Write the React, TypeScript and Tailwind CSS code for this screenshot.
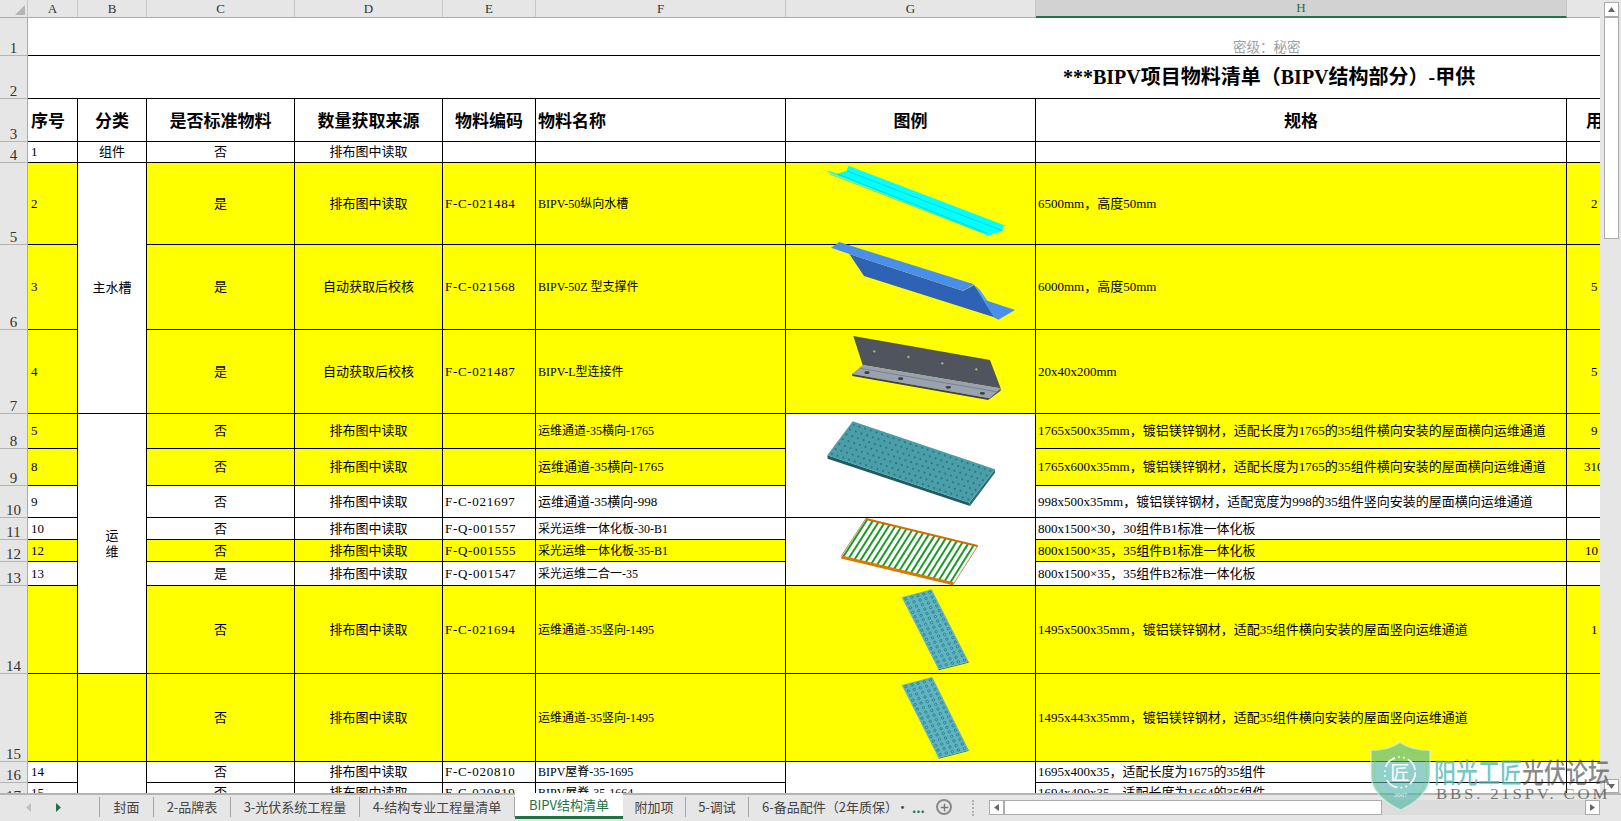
import { Plus } from 'lucide-react';

/* -------------------------------------------------------
 * Sheet data
 * ----------------------------------------------------- */

type Span = { span: number; text?: string; yellow?: boolean };

type Row = {
  num: number;
  height: string;
  yellow?: boolean;
  seq?: string;
  cat?: Span;
  std: string;
  source: string;
  code?: string;
  name?: string;
  nameSize?: string;
  pic?: Span;
  spec?: string;
  qty?: string;
  qtyPad?: string;
};

const SOURCE = '排布图中读取';
const AUTO = '自动获取后校核';

const ROWS: Row[] = [
  { num: 4, height: 'h-[21px]', seq: '1', cat: { span: 1, text: '组件' }, std: '否', source: SOURCE, pic: { span: 1 } },
  { num: 5, height: 'h-[82px]', yellow: true, seq: '2', cat: { span: 3, text: '主水槽' }, std: '是', source: SOURCE, code: 'F-C-021484', name: 'BIPV-50纵向水槽', nameSize: 'text-[12px]', pic: { span: 1, yellow: true }, spec: '6500mm，高度50mm', qty: '2', qtyPad: 'pl-[24px]' },
  { num: 6, height: 'h-[85px]', yellow: true, seq: '3', std: '是', source: AUTO, code: 'F-C-021568', name: 'BIPV-50Z 型支撑件', nameSize: 'text-[12px]', pic: { span: 1, yellow: true }, spec: '6000mm，高度50mm', qty: '5', qtyPad: 'pl-[24px]' },
  { num: 7, height: 'h-[84px]', yellow: true, seq: '4', std: '是', source: AUTO, code: 'F-C-021487', name: 'BIPV-L型连接件', nameSize: 'text-[12px]', pic: { span: 1, yellow: true }, spec: '20x40x200mm', qty: '5', qtyPad: 'pl-[24px]' },
  { num: 8, height: 'h-[35px]', yellow: true, seq: '5', cat: { span: 7, text: '运维' }, std: '否', source: SOURCE, name: '运维通道-35横向-1765', nameSize: 'text-[12px]', pic: { span: 3 }, spec: '1765x500x35mm，镀铝镁锌钢材，适配长度为1765的35组件横向安装的屋面横向运维通道', qty: '9', qtyPad: 'pl-[24px]' },
  { num: 9, height: 'h-[37px]', yellow: true, seq: '8', std: '否', source: SOURCE, name: '运维通道-35横向-1765', spec: '1765x600x35mm，镀铝镁锌钢材，适配长度为1765的35组件横向安装的屋面横向运维通道', qty: '310', qtyPad: 'pl-[17px]' },
  { num: 10, height: 'h-[32px]', seq: '9', std: '否', source: SOURCE, code: 'F-C-021697', name: '运维通道-35横向-998', spec: '998x500x35mm，镀铝镁锌钢材，适配宽度为998的35组件竖向安装的屋面横向运维通道' },
  { num: 11, height: 'h-[22px]', seq: '10', std: '否', source: SOURCE, code: 'F-Q-001557', name: '采光运维一体化板-30-B1', nameSize: 'text-[12px]', pic: { span: 3 }, spec: '800x1500×30，30组件B1标准一体化板' },
  { num: 12, height: 'h-[22px]', yellow: true, seq: '12', std: '否', source: SOURCE, code: 'F-Q-001555', name: '采光运维一体化板-35-B1', nameSize: 'text-[12px]', spec: '800x1500×35，35组件B1标准一体化板', qty: '10', qtyPad: 'pl-[18px]' },
  { num: 13, height: 'h-[24px]', seq: '13', std: '是', source: SOURCE, code: 'F-Q-001547', name: '采光运维二合一-35', nameSize: 'text-[12px]', spec: '800x1500×35，35组件B2标准一体化板' },
  { num: 14, height: 'h-[88px]', yellow: true, std: '否', source: SOURCE, code: 'F-C-021694', name: '运维通道-35竖向-1495', nameSize: 'text-[12px]', pic: { span: 1, yellow: true }, spec: '1495x500x35mm，镀铝镁锌钢材，适配35组件横向安装的屋面竖向运维通道', qty: '1', qtyPad: 'pl-[24px]' },
  { num: 15, height: 'h-[88px]', yellow: true, cat: { span: 1, yellow: true }, std: '否', source: SOURCE, name: '运维通道-35竖向-1495', nameSize: 'text-[12px]', pic: { span: 1, yellow: true }, spec: '1495x443x35mm，镀铝镁锌钢材，适配35组件横向安装的屋面竖向运维通道' },
  { num: 16, height: 'h-[21px]', seq: '14', cat: { span: 2 }, std: '否', source: SOURCE, code: 'F-C-020810', name: 'BIPV屋脊-35-1695', nameSize: 'text-[12px]', pic: { span: 2 }, spec: '1695x400x35，适配长度为1675的35组件' },
  { num: 17, height: 'h-[21px]', seq: '15', std: '否', source: SOURCE, code: 'F-C-020819', name: 'BIPV屋脊-35-1664', nameSize: 'text-[12px]', spec: '1694x400x35，适配长度为1664的35组件' },
];

const COLUMNS = [
  { label: 'A', width: 'w-[50px]' },
  { label: 'B', width: 'w-[69px]' },
  { label: 'C', width: 'w-[148px]' },
  { label: 'D', width: 'w-[148px]' },
  { label: 'E', width: 'w-[93px]' },
  { label: 'F', width: 'w-[250px]' },
  { label: 'G', width: 'w-[250px]' },
  { label: 'H', width: 'w-[531px]' },
  { label: '', width: 'w-[44px]' },
];

const TABS = [
  { label: '封面', width: 'w-[54px]' },
  { label: '2-品牌表', width: 'w-[77px]' },
  { label: '3-光伏系统工程量', width: 'w-[129px]' },
  { label: '4-结构专业工程量清单', width: 'w-[155px]' },
  { label: 'BIPV结构清单', width: 'w-[108px]', active: true },
  { label: '附加项', width: 'w-[63px]' },
  { label: '5-调试', width: 'w-[63px]' },
];

const CELL = 'border-r border-b border-black p-0 align-middle overflow-hidden whitespace-nowrap';
const ROW_HEAD = 'bg-[#e6e6e6] border-r border-b border-r-[#ababab] border-b-[#b4b4b4] p-0 align-bottom text-center text-[15px] leading-[13px] text-[#333]';

/* -------------------------------------------------------
 * Pictures floating over the sheet
 * ----------------------------------------------------- */

type Pt = [number, number];

// point inside a quad a-b-c-d, u along a->b, v along a->d
function quadPoint(a: Pt, b: Pt, c: Pt, d: Pt, u: number, v: number): Pt {
  const tx = a[0] + (b[0] - a[0]) * u;
  const ty = a[1] + (b[1] - a[1]) * u;
  const bx = d[0] + (c[0] - d[0]) * u;
  const by = d[1] + (c[1] - d[1]) * u;
  return [tx + (bx - tx) * v, ty + (by - ty) * v];
}

function Holes({ quad, cols, rows, r, fill, ring }: { quad: [Pt, Pt, Pt, Pt]; cols: number; rows: number; r: number; fill: string; ring?: string }) {
  const dots: Pt[] = [];
  for (let i = 0; i < cols; i++) {
    for (let j = 0; j < rows; j++) {
      dots.push(quadPoint(quad[0], quad[1], quad[2], quad[3], (i + 0.5) / cols, (j + 0.5) / rows));
    }
  }
  return (
    <>
      {dots.map(([x, y], i) => (
        <circle key={i} cx={x} cy={y} r={r} fill={fill} stroke={ring} strokeWidth={ring ? 2.2 : 0} />
      ))}
    </>
  );
}

function UpperPictures() {
  return (
    <svg className="absolute left-[780px] top-[150px] w-[260px] h-[270px]" viewBox="0 0 780 810">
      {/* cyan gutter */}
      <polygon points="138,64 148,64 172,71 200,62 205,47 677,227 669,229 667,244 640,251 622,258 606,248" fill="#00ffff" />
      <polyline points="150,72 606,248" fill="none" stroke="#14d0d8" strokeWidth="2" />
      <polyline points="172,72 622,250" fill="none" stroke="#10c0c8" strokeWidth="2" />
      <polyline points="203,64 667,242" fill="none" stroke="#10c0c8" strokeWidth="2" />
      {/* blue bracket */}
      <polygon points="208,312 550,423 582,405 652,505 252,378" fill="#2d62b5" />
      <polygon points="153,293 178,276 205,285 582,403 550,423 208,312" fill="#4a8fea" />
      <polygon points="582,404 600,420 660,508 642,502" fill="#5aa0f5" />
      <polygon points="615,450 705,480 655,509 642,502" fill="#4a8fea" />
      {/* grey angle */}
      <polygon points="220,558 630,630 662,715 640,712 248,645" fill="#50545c" />
      <polygon points="248,645 662,715 628,745 216,672" fill="#9aa2b0" />
      <polygon points="216,672 628,745 625,750 217,678" fill="#3f4248" />
      <polygon points="628,745 662,715 662,722 625,750" fill="#55585f" />
      <line x1="240" y1="655" x2="650" y2="725" stroke="#6c7079" strokeWidth="2" />
      {[[283, 604], [385, 621], [487, 640], [589, 658]].map(([x, y]) => (
        <circle key={x} cx={x} cy={y} r="5" fill="#a8a88e" stroke="#33363c" strokeWidth="1.5" />
      ))}
      {[[261, 668], [362, 686], [505, 712], [607, 730]].map(([x, y]) => (
        <ellipse key={x} cx={x} cy={y} rx="8" ry="4" fill="#3a3d44" />
      ))}
    </svg>
  );
}

function LowerPictures() {
  const stripes = Array.from({ length: 20 }, (_, i) => (i + 0.3) / 20);
  const plate: [Pt, Pt, Pt, Pt] = [[218, 34], [645, 178], [568, 278], [142, 136]];
  const panelA: [Pt, Pt, Pt, Pt] = [[365, 562], [455, 538], [566, 755], [475, 778]];
  const panelB: [Pt, Pt, Pt, Pt] = [[365, 825], [457, 801], [566, 1020], [475, 1043]];
  return (
    <svg className="absolute left-[780px] top-[410px] w-[260px] h-[360px]" viewBox="0 0 780 1080">
      {/* perforated walkway plate */}
      <polygon points="142,136 568,278 570,288 143,146" fill="#1f5a66" />
      <polygon points="568,278 645,178 645,188 570,288" fill="#2c6c76" />
      <polygon points="218,34 645,178 568,278 142,136" fill="#4a9ea8" />
      <Holes quad={plate} cols={25} rows={7} r={3.2} fill="#2f7680" />

      {/* daylight panel frame */}
      <polygon points="258,325 593,408 520,525 184,440" fill="#ffffff" />
      {stripes.map(u => {
        const top = quadPoint([258, 325], [593, 408], [520, 525], [184, 440], u, 0);
        const bottom = quadPoint([258, 325], [593, 408], [520, 525], [184, 440], u, 1);
        return <line key={u} x1={top[0]} y1={top[1]} x2={bottom[0]} y2={bottom[1]} stroke="#1f9a2a" strokeWidth="6" />;
      })}
      <line x1="258" y1="325" x2="184" y2="438" stroke="#c08a60" strokeWidth="3" />
      <line x1="593" y1="408" x2="520" y2="523" stroke="#c08a60" strokeWidth="3" />
      <line x1="258" y1="327" x2="593" y2="408" stroke="#d06f00" strokeWidth="6" />
      <line x1="184" y1="441" x2="520" y2="521" stroke="#d97a00" strokeWidth="9" />

      {/* vertical walkway plates */}
      <polygon points="475,778 566,755 566,758 476,781" fill="#2f7f8c" />
      <polygon points="365,562 455,538 566,755 475,778" fill="#5fb4c2" />
      <Holes quad={panelA} cols={5} rows={16} r={3.5} fill="#74c2cc" ring="#1f6a78" />
      <polygon points="475,1043 566,1020 566,1023 476,1046" fill="#2f7f8c" />
      <polygon points="365,825 457,801 566,1020 475,1043" fill="#5fb4c2" />
      <Holes quad={panelB} cols={5} rows={16} r={3.5} fill="#74c2cc" ring="#1f6a78" />
    </svg>
  );
}

function Watermark() {
  return (
    <>
      <svg className="absolute left-[1360px] top-[735px] w-[74px] h-[84px] pointer-events-none" viewBox="0 0 222 252">
        <path d="M120 22 C95 38 65 46 33 46 L33 120 C33 170 80 205 122 225 C165 205 210 170 210 120 L210 46 C175 46 145 38 120 22Z" fill="#4fb3ad" fillOpacity="0.62" stroke="#d8efe6" strokeOpacity="0.75" strokeWidth="4" />
        <path d="M120 34 C98 48 70 56 44 56 L44 120 C44 162 84 194 122 213 C160 194 199 162 199 120 L199 56 C172 56 142 48 120 34Z" fill="none" stroke="#8fd05c" strokeOpacity="0.6" strokeWidth="3" />
        <circle cx="120" cy="112" r="46" fill="none" stroke="#ffffff" strokeWidth="5" strokeDasharray="40 10 5 10 5 10" />
        <text x="120" y="134" textAnchor="middle" fontSize="58" fill="#ffffff" fontFamily="'Noto Sans CJK SC', sans-serif">匠</text>
        <text x="122" y="187" textAnchor="middle" fontSize="20" fill="#dff3ee" fontFamily="'Liberation Serif', serif">2007</text>
      </svg>
      <div className="absolute left-[1434px] top-[752px] text-[22px] leading-[30px] font-medium scale-y-[1.25] origin-top whitespace-nowrap pointer-events-none [font-family:'Noto_Sans_CJK_SC',sans-serif]">
        <span className="text-[#4fb8b4]/80">阳光工匠</span>
        <span className="text-[#3a3a3a]/60">光伏论坛</span>
      </div>
      <div className="absolute left-[1436px] top-[785px] text-[15px] leading-[18px] tracking-[2.5px] scale-x-[1.12] origin-left whitespace-nowrap text-[#555]/80 pointer-events-none [font-family:'Liberation_Serif',serif]">
        BBS. 21SPV. COM
      </div>
    </>
  );
}

/* -------------------------------------------------------
 * Sheet
 * ----------------------------------------------------- */

function Sheet() {
  return (
    <div className="relative w-[1600px] h-[793px] overflow-hidden bg-white">
      <table className="table-fixed border-separate border-spacing-0 w-[1611px] text-black text-[13px] leading-[16px] [font-family:'Liberation_Serif','Noto_Sans_CJK_SC',serif]">
        <colgroup>
          <col className="w-[28px]" />
          {COLUMNS.map(c => <col key={c.label} className={c.width} />)}
        </colgroup>
        <tbody>
          {/* Column letters */}
          <tr className="h-[18px]">
            <td className="bg-[#e6e6e6] border-r border-b border-r-[#c6c6c6] border-b-[#ababab] p-0">
              <svg className="w-[27px] h-[17px]" viewBox="0 0 27 17"><polygon points="25,5 25,15 15,15" fill="#b4b4b4" /></svg>
            </td>
            {COLUMNS.map(c => (
              <td
                key={c.label}
                className={c.label === 'H'
                  ? 'bg-[#d2d2d2] border-r border-b-2 border-r-[#c6c6c6] border-b-[#217346] text-[#217346] p-0 text-center text-[13px]'
                  : 'bg-[#e6e6e6] border-r border-b border-r-[#c6c6c6] border-b-[#ababab] text-[#333] p-0 text-center text-[13px]'}
              >
                {c.label}
              </td>
            ))}
          </tr>

          {/* Merged heading rows */}
          <tr className="h-[38px]">
            <td className={ROW_HEAD}>1</td>
            <td colSpan={9} className="border-b border-black p-0 pl-[1205px] align-bottom text-[13.5px] leading-[15px] text-[#a0a0a0] whitespace-nowrap">密级：秘密</td>
          </tr>
          <tr className="h-[43px]">
            <td className={ROW_HEAD}>2</td>
            <td colSpan={9} className="border-b border-black p-0 pl-[1035px] align-middle text-[20px] font-bold whitespace-nowrap">***BIPV项目物料清单（BIPV结构部分）-甲供</td>
          </tr>
          <tr className="h-[43px] text-[17px] font-bold">
            <td className={ROW_HEAD + ' font-normal'}>3</td>
            <td className={CELL + ' pl-[3px] pt-[3px]'}>序号</td>
            <td className={CELL + ' text-center pt-[3px]'}>分类</td>
            <td className={CELL + ' text-center pt-[3px]'}>是否标准物料</td>
            <td className={CELL + ' text-center pt-[3px]'}>数量获取来源</td>
            <td className={CELL + ' text-center pt-[3px]'}>物料编码</td>
            <td className={CELL + ' pl-[2px] pt-[3px]'}>物料名称</td>
            <td className={CELL + ' text-center pt-[3px]'}>图例</td>
            <td className={CELL + ' text-center pt-[3px]'}>规格</td>
            <td className={CELL + ' pl-[19px] pt-[3px]'}>用</td>
          </tr>

          {/* Material rows */}
          {ROWS.map(row => {
            const fill = row.yellow ? 'bg-[#ffff00]' : 'bg-white';
            return (
              <tr key={row.num} className={row.height}>
                <td className={ROW_HEAD}>{row.num}</td>
                <td className={`${CELL} ${fill} pl-[3px]`}>{row.seq}</td>
                {row.cat && (
                  <td rowSpan={row.cat.span} className={`${CELL} ${row.cat.yellow ? 'bg-[#ffff00]' : 'bg-white'} text-center`}>
                    {row.cat.text === '运维' ? <>运<br />维</> : row.cat.text}
                  </td>
                )}
                <td className={`${CELL} ${fill} text-center`}>{row.std}</td>
                <td className={`${CELL} ${fill} text-center`}>{row.source}</td>
                <td className={`${CELL} ${fill} pl-[2px] tracking-[0.7px]`}>{row.code}</td>
                <td className={`${CELL} ${fill} pl-[2px] ${row.nameSize ?? ''}`}>{row.name}</td>
                {row.pic && <td rowSpan={row.pic.span} className={`${CELL} ${row.pic.yellow ? 'bg-[#ffff00]' : 'bg-white'}`} />}
                <td className={`${CELL} ${fill} pl-[2px]`}>{row.spec}</td>
                <td className={`${CELL} ${fill} ${row.qtyPad ?? ''}`}>{row.qty}</td>
              </tr>
            );
          })}
        </tbody>
      </table>
      <UpperPictures />
      <LowerPictures />
    </div>
  );
}

function VerticalScrollbar() {
  return (
    <div className="w-[21px] h-[793px] bg-[#e6e6e6] flex flex-col items-center pl-[1px]">
      <div className="w-[15px] h-[15px] mt-[2px] bg-white border border-[#ababab] flex items-center justify-center">
        <svg className="w-[7px] h-[5px]" viewBox="0 0 7 5"><polygon points="3.5,0 7,5 0,5" fill="#666" /></svg>
      </div>
      <div className="w-[15px] h-[222px] bg-white border border-[#ababab]" />
      <div className="flex-1" />
      <div className="w-[15px] h-[14px] bg-white border border-[#ababab] flex items-center justify-center">
        <svg className="w-[7px] h-[5px]" viewBox="0 0 7 5"><polygon points="0,0 7,0 3.5,5" fill="#666" /></svg>
      </div>
    </div>
  );
}

function TabBar() {
  return (
    <div className="h-[28px] bg-[#e6e6e6] border-t-2 border-[#b4b4b4] flex items-start text-[13px] text-[#444] [font-family:'Noto_Sans_CJK_SC',sans-serif]">
      {/* Sheet navigation arrows */}
      <div className="w-[100px] h-[20px] flex items-center border-r border-[#a6a6a6] mt-[2px] pl-[26px] gap-[25px]">
        <svg className="w-[5px] h-[9px]" viewBox="0 0 5 9"><polygon points="5,0 5,9 0,4.5" fill="#c0c0c0" /></svg>
        <svg className="w-[5px] h-[9px]" viewBox="0 0 5 9"><polygon points="0,0 0,9 5,4.5" fill="#217346" /></svg>
      </div>

      {/* Tabs */}
      {TABS.map(tab => (
        <div
          key={tab.label}
          className={tab.active
            ? `${tab.width} h-[26px] -mt-[2px] bg-white border-b-[3px] border-[#217346] text-[#217346] flex items-center justify-center whitespace-nowrap`
            : `${tab.width} h-[20px] mt-[2px] border-r border-[#a6a6a6] flex items-center justify-center whitespace-nowrap`}
        >
          {tab.label}
        </div>
      ))}
      <div className="w-[147px] h-[20px] mt-[2px] pl-[13px] flex items-center whitespace-nowrap overflow-hidden">6-备品配件（2年质保）</div>

      {/* Overflow marks and add-sheet button */}
      <div className="w-[16px] h-[20px] mt-[2px] flex items-center text-[#444]">·</div>
      <div className="w-[22px] h-[20px] mt-[2px] flex items-center font-bold text-[#217346] leading-none">...</div>
      <div className="w-[16px] h-[16px] mt-[4px] ml-[2px] rounded-full border-2 border-[#8a8a8a] flex items-center justify-center">
        <Plus className="w-[11px] h-[11px] text-[#777]" strokeWidth={3} />
      </div>
      <div className="w-[2px] h-[16px] mt-[5px] ml-[20px] border-l-2 border-dotted border-[#b0b0b0]" />

      {/* Horizontal scrollbar */}
      <div className="w-[611px] h-[15px] mt-[5px] ml-[15px] bg-[#dcdcdc] flex">
        <div className="w-[15px] h-[15px] bg-white border border-[#ababab] flex items-center justify-center">
          <svg className="w-[5px] h-[7px]" viewBox="0 0 5 7"><polygon points="5,0 5,7 0,3.5" fill="#666" /></svg>
        </div>
        <div className="w-[378px] h-[15px] bg-white border border-[#ababab]" />
        <div className="flex-1" />
        <div className="w-[15px] h-[15px] bg-white border border-[#ababab] flex items-center justify-center">
          <svg className="w-[5px] h-[7px]" viewBox="0 0 5 7"><polygon points="0,0 0,7 5,3.5" fill="#666" /></svg>
        </div>
      </div>
    </div>
  );
}

/* -------------------------------------------------------
 * Main Component
 * ----------------------------------------------------- */

export default function App() {
  return (
    <div className="relative w-[1621px] h-[821px] overflow-hidden bg-[#e6e6e6]">
      <div className="flex">
        <Sheet />
        <VerticalScrollbar />
      </div>
      <TabBar />
      <Watermark />
    </div>
  );
}
